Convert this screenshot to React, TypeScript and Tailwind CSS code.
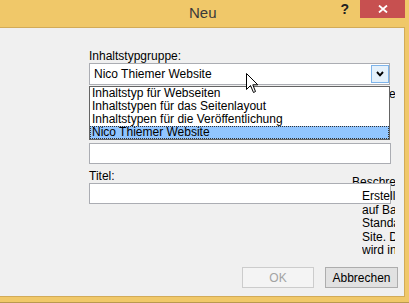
import React from 'react'

const FONT = { fontFamily: "'Segoe UI', 'Liberation Sans', Arial, sans-serif" }

const ITEMS = [
  'Inhaltstyp für Webseiten',
  'Inhaltstypen für das Seitenlayout',
  'Inhaltstypen für die Veröffentlichung',
  'Nico Thiemer Website',
]

const DESCRIPTION = ['Erstellen Sie', 'auf Basis', 'Standard', 'Site. Der', 'wird in']

function Cursor() {
  return (
    <svg width="13" height="21" viewBox="0 0 13 21" className="absolute left-[246px] top-[73px] z-30">
      <path
        d="M0.5 0.5 L0.5 16.5 L4.5 12.5 L7.5 19.5 L9.5 18.5 L6.8 11.8 L11.8 11.8 Z"
        fill="#fff"
        stroke="#000"
        strokeWidth="1"
        strokeLinejoin="miter"
      />
    </svg>
  )
}

export default function App() {
  return (
    <div
      className="relative flex h-[303px] w-[409px] flex-col overflow-hidden border-b border-[#B99A4E] bg-[#F0C869] text-[12px] text-black"
      style={FONT}
    >
      {/* Title bar */}
      <div className="flex h-[27px] shrink-0 items-start">
        <span className="ml-[189px] mt-[3px] text-[15px] leading-[20px] text-[#3a3a3a]">Neu</span>
        <span className="ml-auto text-[14px] font-bold leading-[18px] text-[#222]">?</span>
        <button className="ml-[11px] flex h-[18px] w-[45px] items-center justify-center bg-[#C75050]">
          <svg width="10" height="8" viewBox="0 0 10 8">
            <path d="M1 0.5 L9 7.5 M9 0.5 L1 7.5" stroke="#fff" strokeWidth="1.8" />
          </svg>
        </button>
        <div className="w-[4px]" />
      </div>

      {/* Client area */}
      <div className="relative h-[270px] w-[405px] shrink-0 border-y border-r border-[#D2AB58] bg-[#F0F0F0]">
        <div className="flex flex-col pl-[89px] pt-[21px]">
          <div className="h-[14px] leading-[14px]">Inhaltstypgruppe:</div>

          <div className="flex h-[22px] w-[301px] border border-[#ABADB3] bg-white">
            <span className="flex-1 pl-[4px] leading-[20px]">Nico Thiemer Website</span>
            <span className="mb-[1px] mt-[1px] flex w-[18px] items-center justify-center border border-[#7EB4EA] bg-[#E5F1FB]">
              <svg width="8" height="6" viewBox="0 0 8 6">
                <path d="M1 1 L4 4.3 L7 1" fill="none" stroke="#000" strokeWidth="1.9" />
              </svg>
            </span>
          </div>

          <div className="relative z-10 mt-px flex w-[301px] flex-col border border-[#646464] bg-white">
            {ITEMS.map((item, i) => (
              <div
                key={item}
                className={
                  i === ITEMS.length - 1
                    ? 'h-[13px] whitespace-nowrap border border-dotted border-[#333] bg-[#91C5FF] pl-px leading-[11px]'
                    : 'h-[13px] whitespace-nowrap pl-[2px] leading-[13px]'
                }
              >
                {item}
              </div>
            ))}
          </div>

          <div className="mt-[3px] h-[21px] w-[302px] border border-[#ABADB3] bg-white" />

          <div className="mt-[5px] h-[14px] leading-[14px]">Titel:</div>
          <div className="relative z-10 h-[21px] w-[302px] border border-[#ABADB3] bg-white" />

          <div className="mt-[63px] flex justify-end gap-[11px] pr-[6px]">
            <button className="h-[21px] w-[72px] border border-[#CCCCCC] bg-[#F4F4F4] text-[#A3A3A3]">OK</button>
            <button className="h-[21px] w-[73px] border border-[#ADADAD] bg-[#E1E1E1]">Abbrechen</button>
          </div>
        </div>

        {/* Controls of the right column, partly hidden behind the list and boxes */}
        <div className="absolute left-[389px] top-[59px] w-[6px] overflow-hidden leading-[14px]">e</div>
        <div className="absolute left-[352px] top-[147px] w-[43px] overflow-hidden whitespace-nowrap leading-[14px]">
          Beschreibung:
        </div>
        <div className="absolute left-[362px] top-[162px] z-20 w-[33px] overflow-hidden whitespace-nowrap leading-[13.5px]">
          {DESCRIPTION.map((line) => (
            <div key={line}>{line}</div>
          ))}
        </div>
      </div>

      <Cursor />
    </div>
  )
}
